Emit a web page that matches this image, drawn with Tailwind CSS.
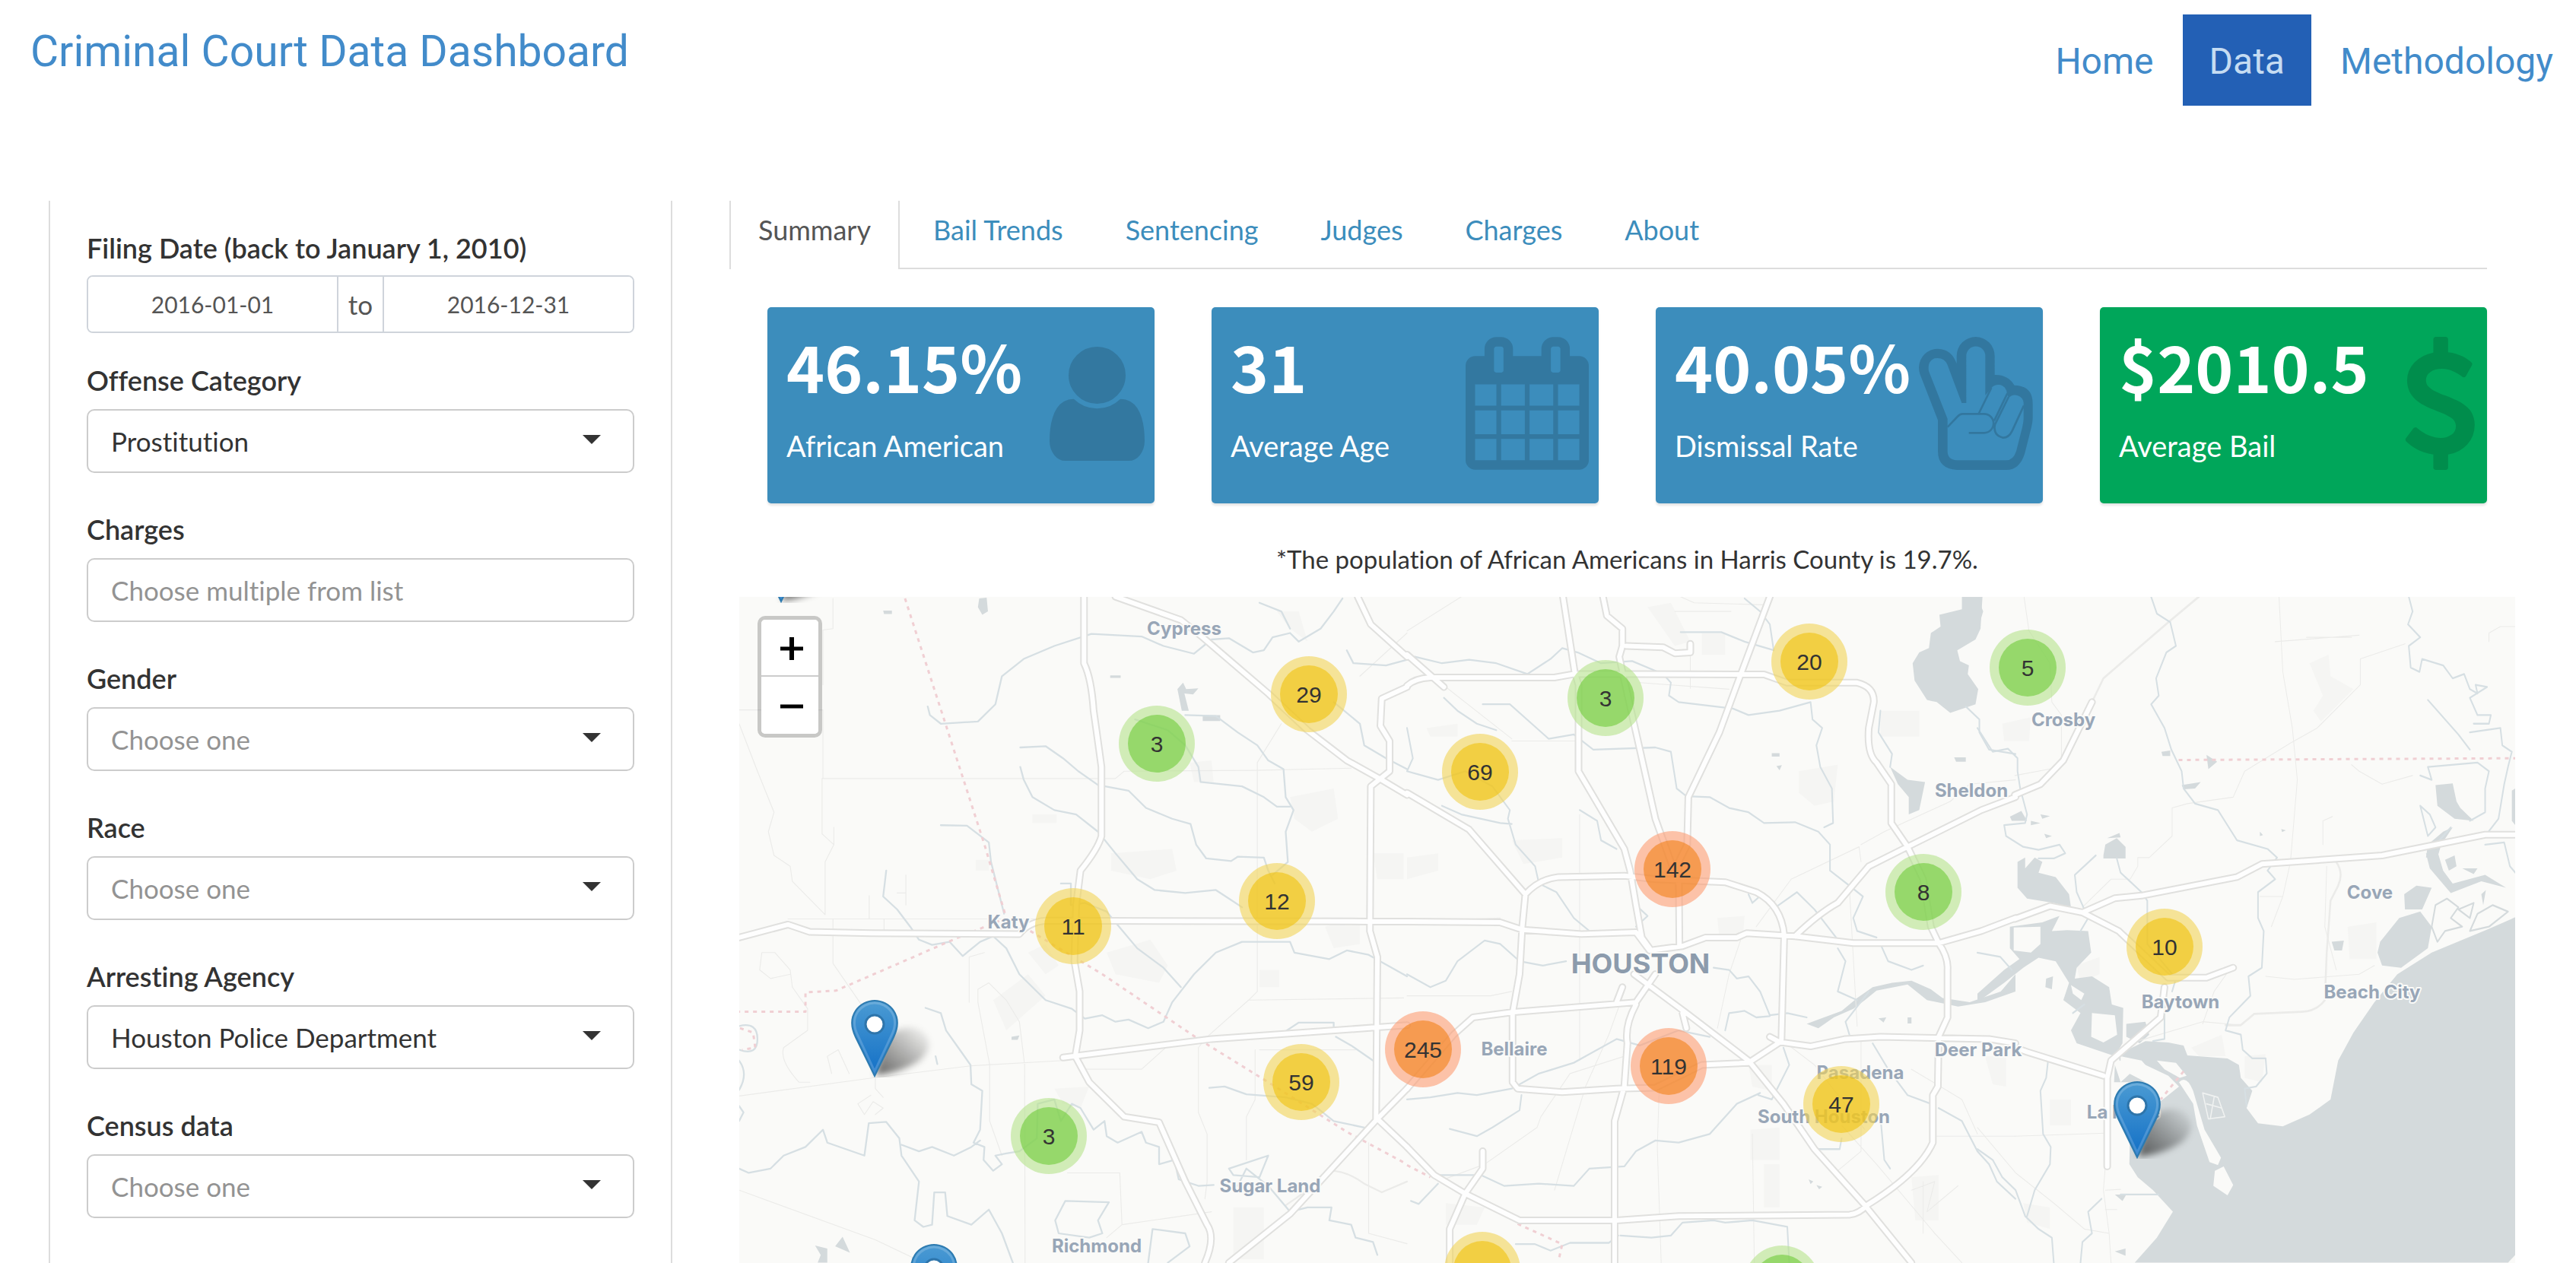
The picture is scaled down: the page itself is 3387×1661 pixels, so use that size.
<!DOCTYPE html>
<html lang="en">
<head>
<meta charset="utf-8">
<title>Criminal Court Data Dashboard</title>
<script src="https://cdn.jsdelivr.net/npm/@tailwindcss/browser@4"></script>
</head>
<body class="min-h-screen flex flex-col bg-white font-['Lato',sans-serif] text-[#333] [font-variant-ligatures:none]">

<header class="flex h-[264px] items-start justify-between pl-10 pr-[30px] font-['Roboto',sans-serif] text-[#428bca]">
  <h1 class="pt-8 text-[57px] leading-[72px]"><a href="#">Criminal Court Data Dashboard</a></h1>
  <nav class="mt-[19px] flex h-[120px] items-center text-[48px] leading-[60px]">
    <a href="#" class="px-[38px] pt-1">Home</a>
    <a href="#" aria-current="page" class="flex h-full items-center bg-[#2360b5] px-[35px] pt-1 text-[#c5dcf2]">Data</a>
    <a href="#" class="pl-[38px] pt-1">Methodology</a>
  </nav>
</header>

<div class="flex flex-1">
  <aside class="ml-16 w-[820px] shrink-0 border-x-2 border-[#ddd] px-12 pt-10">
    <form class="flex flex-col text-[35px] leading-[44px]">
      <fieldset>
        <legend class="font-semibold text-[36px]">Filing Date (back to January 1, 2010)</legend>
        <div class="mt-[14px] flex h-[76px] overflow-hidden rounded-lg border-2 border-[#cfd4db] text-[#555]">
          <input aria-label="From date" type="text" value="2016-01-01" class="w-0 min-w-0 flex-1 bg-white text-center text-[30px]">
          <span class="flex w-[62px] items-center justify-center border-x-2 border-[#cfd4db] bg-white">to</span>
          <input aria-label="To date" type="text" value="2016-12-31" class="w-0 min-w-0 flex-1 bg-white text-center text-[30px]">
        </div>
      </fieldset>

      <div class="mt-10">
        <label for="offense" class="block font-semibold text-[36px]">Offense Category</label>
        <div class="relative mt-4">
          <select id="offense" class="h-[84px] w-full appearance-none rounded-[10px] border-2 border-[#ccc] bg-white px-[30px]"><option>Prostitution</option></select>
          <svg class="pointer-events-none absolute right-11 top-[34px] h-3 w-6" viewBox="0 0 24 12" fill="#333"><path d="M0 0h24L12 12z"/></svg>
        </div>
      </div>
      <div class="mt-[52px]">
        <label for="charges" class="block font-semibold text-[36px]">Charges</label>
        <input id="charges" type="text" placeholder="Choose multiple from list" class="mt-4 block h-[84px] w-full rounded-[10px] border-2 border-[#ccc] bg-white px-[30px] placeholder:text-[#939393]">
      </div>
      <div class="mt-[52px]">
        <label for="gender" class="block font-semibold text-[36px]">Gender</label>
        <div class="relative mt-4">
          <select id="gender" class="h-[84px] w-full appearance-none rounded-[10px] border-2 border-[#ccc] bg-white px-[30px] text-[#939393]"><option>Choose one</option></select>
          <svg class="pointer-events-none absolute right-11 top-[34px] h-3 w-6" viewBox="0 0 24 12" fill="#333"><path d="M0 0h24L12 12z"/></svg>
        </div>
      </div>
      <div class="mt-[52px]">
        <label for="race" class="block font-semibold text-[36px]">Race</label>
        <div class="relative mt-4">
          <select id="race" class="h-[84px] w-full appearance-none rounded-[10px] border-2 border-[#ccc] bg-white px-[30px] text-[#939393]"><option>Choose one</option></select>
          <svg class="pointer-events-none absolute right-11 top-[34px] h-3 w-6" viewBox="0 0 24 12" fill="#333"><path d="M0 0h24L12 12z"/></svg>
        </div>
      </div>
      <div class="mt-[52px]">
        <label for="agency" class="block font-semibold text-[36px]">Arresting Agency</label>
        <div class="relative mt-4">
          <select id="agency" class="h-[84px] w-full appearance-none rounded-[10px] border-2 border-[#ccc] bg-white px-[30px]"><option>Houston Police Department</option></select>
          <svg class="pointer-events-none absolute right-11 top-[34px] h-3 w-6" viewBox="0 0 24 12" fill="#333"><path d="M0 0h24L12 12z"/></svg>
        </div>
      </div>
      <div class="mt-[52px]">
        <label for="census" class="block font-semibold text-[36px]">Census data</label>
        <div class="relative mt-4">
          <select id="census" class="h-[84px] w-full appearance-none rounded-[10px] border-2 border-[#ccc] bg-white px-[30px] text-[#939393]"><option>Choose one</option></select>
          <svg class="pointer-events-none absolute right-11 top-[34px] h-3 w-6" viewBox="0 0 24 12" fill="#333"><path d="M0 0h24L12 12z"/></svg>
        </div>
      </div>
    </form>
  </aside>

  <main class="ml-[75px] mr-20 flex min-w-0 flex-1 flex-col">
    <nav class="mr-[37px] flex h-[90px] text-[36px] leading-[44px] text-[#3c8dbc]">
      <a href="#" aria-current="page" class="border-x-2 border-[#ddd] px-9 pt-4 text-[#555]">Summary</a>
      <div class="flex flex-1 gap-[82px] border-b-2 border-[#ddd] pl-[44px] pt-4">
        <a href="#">Bail Trends</a>
        <a href="#">Sentencing</a>
        <a href="#">Judges</a>
        <a href="#">Charges</a>
        <a href="#">About</a>
      </div>
    </nav>

    <section class="ml-[50px] mr-[37px] mt-[50px] grid grid-cols-4 gap-[75px] text-white">
      <div class="relative h-[258px] rounded-[5px] bg-[#3c8dbc] pl-[25px] pt-[26px] shadow-[0_3px_3px_rgba(0,0,0,0.1)]">
        <svg class="absolute right-[13px] top-[52px] h-[150px] w-[125px] fill-black/15" viewBox="256 128 1280 1536"><path d="M1536 1399q0 109-62.5 187t-150.5 78h-854q-88 0-150.5-78t-62.5-187q0-85 8.5-160.5t31.5-152 58.5-131 94-89 134.5-34.5q131 128 313 128t313-128q76 0 134.5 34.5t94 89 58.5 131 31.5 152 8.5 160.5zm-256-887q0 159-112.5 271.5t-271.5 112.5-271.5-112.5-112.5-271.5 112.5-271.5 271.5-112.5 271.5 112.5 112.5 271.5z"/></svg>
        <p class="relative font-['Noto_Sans_CJK_SC',sans-serif] text-[85px] font-bold leading-[100px]">46.15%</p>
        <p class="relative mt-8 text-[38px] leading-[48px]">African American</p>
      </div>
      <div class="relative h-[258px] rounded-[5px] bg-[#3c8dbc] pl-[25px] pt-[26px] shadow-[0_3px_3px_rgba(0,0,0,0.1)]">
        <svg class="absolute right-[13px] top-[39px] h-[175px] w-[162px] fill-black/15" viewBox="64 0 1664 1792"><path d="M192 1664h288v-288h-288v288zm352 0h320v-288h-320v288zm-352-352h288v-320h-288v320zm352 0h320v-320h-320v320zm-352-384h288v-288h-288v288zm736 736h320v-288h-320v288zm-384-736h320v-288h-320v288zm768 736h288v-288h-288v288zm-384-352h320v-320h-320v320zm-352-864v-288q0-13-9.5-22.5t-22.5-9.5h-64q-13 0-22.5 9.5t-9.5 22.5v288q0 13 9.5 22.5t22.5 9.5h64q13 0 22.5-9.5t9.5-22.5zm736 864h288v-320h-288v320zm-384-384h320v-288h-320v288zm384 0h288v-288h-288v288zm32-480v-288q0-13-9.5-22.5t-22.5-9.5h-64q-13 0-22.5 9.5t-9.5 22.5v288q0 13 9.5 22.5t22.5 9.5h64q13 0 22.5-9.5t9.5-22.5zm384-64v1280q0 52-38 90t-90 38h-1408q-52 0-90-38t-38-90v-1280q0-52 38-90t90-38h128v-96q0-66 47-113t113-47h64q66 0 113 47t47 113v96h384v-96q0-66 47-113t113-47h64q66 0 113 47t47 113v96h128q52 0 90 38t38 90z"/></svg>
        <p class="relative font-['Noto_Sans_CJK_SC',sans-serif] text-[85px] font-bold leading-[100px]">31</p>
        <p class="relative mt-8 text-[38px] leading-[48px]">Average Age</p>
      </div>
      <div class="relative h-[258px] rounded-[5px] bg-[#3c8dbc] pl-[25px] pt-[26px] shadow-[0_3px_3px_rgba(0,0,0,0.1)]">
        <svg class="absolute right-[13px] top-[39px] h-[175px] w-[150px] opacity-15" viewBox="70 69 450 525">
          <path fill="#000" fill-rule="evenodd" d="M70 190A75 75 0 0 1 145 116Q200 118 219 175V144A75 75 0 0 1 369 144V219Q420 217 447 260Q519 262 519 332V390Q519 405 514 425L488 528Q468 594 415 594H220Q145 590 145 520V398L75 218Q70 205 70 190ZM183 392L109 204Q103 165 132 154Q168 148 182 178L239 330H257V144A37 37 0 0 1 332 144V300L354 274A34 34 0 0 1 417 292L424 310A34 34 0 0 1 483 330V390Q483 405 478 425L454 520Q442 556 415 556H220Q183 554 183 520Z"/>
          <path fill="none" stroke="#000" stroke-width="8" d="M356 270L306 372M419 292L367 400M183 425L222 384Q232 373 242 373H327A37 37 0 0 1 327 448H267M424 306L370 415Q362 458 402 467Q425 467 438 440L484 340"/>
        </svg>
        <p class="relative font-['Noto_Sans_CJK_SC',sans-serif] text-[85px] font-bold leading-[100px]">40.05%</p>
        <p class="relative mt-8 text-[38px] leading-[48px]">Dismissal Rate</p>
      </div>
      <div class="relative h-[258px] rounded-[5px] bg-[#00a65a] pl-[25px] pt-[26px] shadow-[0_3px_3px_rgba(0,0,0,0.1)]">
        <svg class="absolute right-[16px] top-[39px] h-[175px] w-[92px] fill-black/15" viewBox="424 0 938 1792"><path d="M1362 1185q0 153-99.5 263.5t-258.5 136.5v175q0 14-9 23t-23 9h-135q-13 0-22.5-9.5t-9.5-22.5v-175q-66-9-127.5-31t-101.5-44.5-74-48-46.5-37.5-17.5-18q-17-21-2-41l103-135q7-10 23-12 15-2 24 9l2 2q113 99 243 125 37 8 74 8 81 0 142.5-43t61.5-122q0-28-15-53t-33.5-42-58.5-37.5-66-32-80-32.5q-39-16-61.5-25t-61.5-26.5-62.5-31-56.5-35.5-53.5-42.5-43.5-49-35.5-58-21-66.5-8.5-78q0-138 98-242t255-134v-180q0-13 9.5-22.5t22.5-9.5h135q14 0 23 9t9 23v176q57 6 110.5 23t87 33.5 63.5 37.5 39 29 15 14q17 18 5 38l-81 146q-8 15-23 16-14 3-27-7-3-3-14.5-12t-39-26.5-58.5-32-74.5-26-85.5-11.5q-95 0-155 43t-60 111q0 26 8.5 48t29.5 41.5 39.5 33 56 31 60.5 27 70 27.5q53 20 81 31.5t76 35 75.5 42.5 62 50 53 63.5 31.5 76.5 13 94z"/></svg>
        <p class="relative font-['Noto_Sans_CJK_SC',sans-serif] text-[85px] font-bold leading-[100px]">$2010.5</p>
        <p class="relative mt-8 text-[38px] leading-[48px]">Average Bail</p>
      </div>
    </section>

    <p class="ml-[13px] mt-[51px] text-center text-[33px] leading-[44px]">*The population of African Americans in Harris County is 19.7%.</p>

    <section id="map" class="relative ml-[13px] mt-7 min-h-[876px] flex-1 overflow-hidden bg-[#fafaf8] font-['Liberation_Sans',sans-serif]">
      <svg class="absolute left-0 top-0 h-[876px] w-[2335px]" viewBox="972 785 2335 876" fill="none" stroke-linejoin="round" stroke-linecap="round">
        <defs>
          <linearGradient id="pinFill" x1="0" y1="0" x2="0" y2="1"><stop offset="0" stop-color="#4b9bd3"/><stop offset="1" stop-color="#126fc6"/></linearGradient>
          <linearGradient id="pinShade" x1="0" y1="1" x2="1" y2="0"><stop offset="0" stop-color="#000" stop-opacity=".6"/><stop offset="1" stop-color="#000" stop-opacity="0"/></linearGradient>
          <filter id="soft" x="-30%" y="-30%" width="160%" height="160%"><feGaussianBlur stdDeviation="4"/></filter>

          <!-- motorways, one set per third of the map -->
          <path id="roadsW" vector-effect="non-scaling-stroke" d="M828 26V180Q845 215 850 290Q860 360 868 420V580Q860 610 820 660L810 740L806 870L818 940V1030L808 1090L840 1150Q880 1190 920 1230L1000 1243L1060 1380L1110 1480Q1130 1510 1105 1568M38 815L150 785L200 802L340 805L680 807Q700 780 740 776L1480 778H1568M900 26L1050 80L1100 120L1250 250L1340 335L1430 405L1510 450L1568 485M1568 235L1510 262L1507 325L1528 360V430L1485 465L1483 800L1500 860L1497 1235M1455 26L1485 90L1568 165M780 1093L1120 1050L1500 1023L1568 1018M1160 1568L1300 1455L1500 1235L1568 1165M1500 1235L1568 1300"/>
          <path id="roadsC" vector-effect="non-scaling-stroke" d="M0 160L95 235M0 232Q20 215 60 213H380L430 205H600L920 206L980 225H1160Q1205 235 1203 270L1190 330Q1185 390 1210 410L1248 460V550L1290 605L1330 680L1350 790L1370 828Q1395 860 1393 890V1000L1370 1045L1368 1160L1355 1180V1290Q1320 1360 1185 1435Q1165 1455 1140 1457L700 1460L540 1470H290L150 1408L70 1365L0 1300M402 26L432 200L442 230V430L560 610L575 660L590 740L605 815L625 840M505 26L515 70L555 100V140L547 165L560 220L640 540L700 690M565 140L660 143L690 157L730 155V135M935 26L850 230L805 340L725 490L722 600L700 640L702 835M0 480L160 565L305 715Q340 680 390 675L560 672L640 680L820 687L900 710Q965 740 972 810L965 1050M305 715L297 790L290 900L272 990V1150L285 1165L400 1173L540 1165L640 1163L760 1110L880 1105L965 1055M0 778L240 780L297 797L450 807L590 803L625 845L710 835L770 815H850L875 805L1000 812L1150 828H1370L1480 800L1568 770M0 1165L120 1040L170 1000L270 988L590 965L640 900M585 900L720 990L880 1100L970 1200L1050 1305L1180 1435L1300 1568M590 970Q560 1020 568 1060L560 1160L535 1240V1568M935 1045L960 1057L1040 1067L1130 1050L1220 1045L1500 1050L1568 1060M1000 812Q1060 760 1110 735L1190 650L1290 605L1480 520L1568 490M150 1408L110 1490V1568M150 1408L195 1350V1310M555 930L540 965M710 990L720 1025"/>
          <path id="roadsE" vector-effect="non-scaling-stroke" d="M98 485L165 460L225 405L300 270M98 772L190 742L275 757L370 800L500 908H600L670 885M275 757L360 724L430 718L680 675L745 645L1060 625L1330 577H1420M490 930L480 1000L350 1100L340 1140V1345M98 1070L130 1080L330 1135"/>
        </defs>

        <!-- developed land and parks -->
        <g fill="#f5f5f3">
          <path transform="translate(950 770) scale(.574 .568)" d="M1270 60H1320L1340 130L1300 100ZM1300 490L1400 470L1410 540L1350 570L1310 540ZM890 620L1030 610L1040 660L980 680L890 660ZM880 850L980 820L1020 880L1000 920L900 900ZM620 960L700 900L740 950L650 1030ZM700 850L740 830L770 880L740 900ZM1230 890H1275V930H1230ZM1380 790L1460 770V830L1400 840ZM760 1165L840 1160L820 1210L780 1200ZM1170 1440H1240V1560H1170ZM710 530H765V550H710ZM1070 410L1120 405L1125 455H1080ZM580 635H610V660H580ZM1490 620H1560V680H1500Z"/>
          <path transform="translate(1850 770) scale(.5102 .568)" d="M620 50L680 40L730 130L690 140ZM760 110H820V160H760ZM270 590L400 585V630L300 645ZM1010 430L1110 415L1100 500L1050 510L1010 480ZM1220 290H1320V350H1220ZM0 630L80 620V660L0 680ZM885 1260L960 1255V1330H885ZM920 1340H960V1440H920ZM800 770L870 765L865 820H805ZM1300 1370L1370 1365V1470H1310ZM50 330L130 320V350H60ZM100 1430L200 1440L180 1480H100ZM880 1110H940V1170L890 1160Z"/>
          <path transform="translate(2600 770) scale(.5019 .568)" d="M870 180L920 160L925 210L985 240L900 315L880 290L905 255ZM970 790L1045 780V865H975ZM560 1070L640 1040L650 1090H580ZM65 320L140 305L135 360H70ZM700 1090L755 1085L745 1150L700 1140ZM20 1090H75V1160L40 1155ZM120 1430L190 1440V1490L130 1475ZM260 880L320 860V900L270 920ZM190 1190H245V1250H190Z"/>
        </g>

        <!-- lakes, ship channel and bay -->
        <g fill="#d4dadc">
          <path transform="translate(950 770) scale(.574 .568)" d="M588 30L605 28L608 60L595 68L585 50ZM368 58H388V66H370ZM212 1528L240 1535V1568H218L225 1550ZM275 1508L292 1545L258 1530ZM1042 240L1055 225L1062 240L1090 238L1078 252L1058 250L1068 290H1052ZM1100 300H1140V314H1100ZM888 208H912V214H888ZM662 1045L680 1042L676 1052H662Z"/>
          <path transform="translate(1850 770) scale(.5102 .568)" d="M1430 26H1483L1478 100L1465 125L1418 150L1425 175L1448 185L1445 205L1472 240L1465 275L1400 295L1365 270L1340 265L1308 220L1303 180L1320 155L1345 145L1350 110L1375 95L1372 68L1430 55ZM1245 420L1290 450L1335 455L1320 520L1293 530V490L1265 460ZM940 388H960V396H940ZM952 418L966 416L960 428ZM1410 398H1440V408H1415ZM1160 955L1200 930L1250 920L1300 915L1350 935L1380 955L1450 965L1530 940L1568 900V940L1490 965L1420 975L1340 960L1290 924L1210 938L1180 960L1150 980L1100 1000L1060 1025L1030 1015L1060 1005L1120 985ZM1290 1000H1300V1014H1290ZM1215 1002L1235 1000L1228 1012ZM1035 1375L1047 1380L1040 1386ZM1055 1388L1070 1392L1062 1398Z"/>
          <g transform="translate(2600 770) scale(.5019 .568)">
            <path d="M1409 768L1340 795L1190 850L1100 900L1040 965L985 1035L945 1100L925 1190L870 1225L800 1252L735 1245L705 1210L720 1170L690 1140L685 1110L655 1095L550 1088L540 1065L500 1058L440 1055L370 1085L372 1100L440 1110L500 1135L528 1160L400 1250L398 1340L420 1370L460 1400L512 1450L470 1510L412 1568H1390L1409 1550Z"/>
            <path d="M105 640L125 630V655L150 630L170 640L160 665L205 675L240 715L245 745L200 735L130 725L105 700ZM85 535L115 522L130 545L90 545ZM140 545L165 550L140 555ZM165 530L190 534L170 540ZM175 575L195 580L180 585ZM330 625L335 600L365 585L388 605V632H330ZM340 585L372 573L375 583ZM0 26L15 60L0 105ZM482 385L505 382V395H485ZM600 392L628 408L605 425ZM535 462L585 455L570 470L540 472ZM85 790L170 780L215 765L195 800L235 798L290 800L298 850L260 885L255 910L300 905L345 930L352 970L382 978L380 1060L360 1090L310 1075L260 1060L245 1030L270 990L225 960L240 920L205 870L160 862L120 885L70 920L0 965V945L70 890L110 865L85 840ZM180 910L198 905L195 935L178 930ZM390 1015L440 1010L450 1040L425 1060L390 1045ZM1200 462L1245 458L1255 500L1265 515L1300 545L1250 540L1205 510ZM1118 715L1150 695L1190 700L1165 750L1120 750ZM1055 825L1105 770L1160 755L1190 790L1180 840L1110 885L1060 880L1048 850ZM1175 620L1205 615L1220 660L1245 690L1330 670L1385 700L1320 685L1240 712L1185 655ZM1225 635L1250 625L1255 650L1235 660ZM1270 655L1310 655L1300 668ZM1180 600L1220 570L1245 560L1215 600L1205 630H1175ZM1320 715L1332 705L1325 740ZM928 825L960 822L955 845H935ZM1400 475L1409 470V555L1400 545ZM360 1110L375 1150L400 1130L440 1150L380 1150H358ZM360 1410H390L380 1425ZM360 1542L388 1535V1552ZM740 570L748 578L740 580ZM796 564L808 567L798 571Z"/>
            <path fill="#fafaf8" d="M95 792L165 790V830L140 850L95 845ZM300 990L360 995L366 1040L330 1058L298 1045ZM528 1150Q548 1132 565 1170L595 1260L638 1325L630 1342L608 1335L575 1250L565 1200ZM622 1355L645 1345L670 1388L655 1412L618 1390ZM470 1100L520 1105L548 1135L530 1140L490 1120ZM375 1090L430 1100L480 1150L420 1140L375 1120ZM245 925L280 945L272 960L250 945Z"/>
            <path stroke="#f0f2f1" stroke-width="3" d="M590 1175L630 1185L648 1230L605 1235ZM600 1200L640 1210M610 1235L620 1185"/>
            <path fill="#fafaf8" stroke="#d4dadc" stroke-width="4" d="M1200 740L1230 725L1260 745L1240 770L1270 790L1225 800L1205 825L1190 790ZM1260 750L1300 735L1290 770ZM1310 760L1350 740L1390 755L1340 790L1290 800Z"/>
          </g>
        </g>

        <!-- minor roads -->
        <g stroke="#ebebe9" stroke-width="2">
          <path transform="translate(950 770) scale(.574 .568)" d="M38 288H230V447M253 30V100L230 103V230M38 320L80 430L118 525L105 570L118 625L155 650L160 685L235 762V640L255 600L228 575V447H900L920 430L1220 428L1440 423M255 560V600M150 772H800M336 718V772M253 772V875L345 1010M370 772V805M1225 780V410L1280 320M1225 780V940L1205 960L1110 1045L1090 1070V1220L1110 1270V1380L1105 1420M1205 960L1560 955M1230 1075H1450M565 965V860L600 850M585 965V935L610 920L650 960L680 1010L692 1110L693 1568M585 965L612 1110V1240L640 1320M780 1100L570 1112L345 1140L38 1182M38 1400L350 1515L460 1568M790 1360H910L915 1480L1120 1450M915 1480L880 1510M1200 1330V1230L1220 1190V1075M820 1120H960L1015 1070M420 670V740M400 712H420M1460 210L1568 110M1480 1290V1500L1568 1524M250 1130L240 1090L265 1075L290 1130M200 1150H175Q130 1100 140 1070L195 1030V980L160 930L155 890L120 850H90L85 890L110 910L155 900M340 1180L310 1200L325 1225L345 1195L368 1210L350 1225M350 1140V1165L368 1185"/>
          <path transform="translate(1850 770) scale(.5102 .568)" d="M0 105L140 26M0 778L240 770M730 155V238M600 225L830 240M270 360H435M0 950L215 950L270 940M445 530V1100M650 1165L645 1300L655 1568M890 1270L895 1568M1170 1050V1310L1110 1355M860 820L830 900L800 1025M900 790L990 680L1165 605L1170 640M1170 600L1230 570L1400 500L1450 460L1568 450M380 1400L460 1160L520 1040L560 940M80 1380L200 1340L335 1255L345 1230L420 1130L560 1090M1120 1250L1210 1340L1360 1500L1430 1568M970 1055L1050 1110L1180 1260M1365 1275H1568M1140 700L1160 1020M1300 1120L1430 1190L1470 1270M1300 1400L1360 1380L1340 1450L1420 1390M1330 1380V1500M100 235L270 355M690 20L740 40L930 45M690 60H835"/>
          <path transform="translate(2600 770) scale(.5019 .568)" d="M0 1255L100 1360L200 1430L280 1490L345 1500M98 1275L335 1268M122 26L135 105L190 180L195 270L220 300V400M790 26L800 200L825 330L838 450L820 640L800 720L770 790M1003 170V230L890 330L820 365L700 430L670 490L550 505L510 515V580L450 630H420V650L400 680H350L275 745M1340 130V110L1370 95H1409M1003 170L1120 135M862 120H980M780 130L1000 115M905 600V545L930 535M915 650L910 790L940 890M800 720H740M590 1015L620 940L660 890M400 1060L590 1010L690 1018M755 905L830 912L1000 900L1040 880M335 1345L330 1400L345 1500L350 1568M335 1445H365M335 1400L375 1398M98 440L220 420M1140 440L1060 460L1000 430L980 415"/>
          <path stroke-width="5" transform="translate(2600 770) scale(.5019 .568)" d="M300 270L330 215L500 85L580 26M940 640Q960 665 945 695L925 730L915 850L910 960Q890 985 850 987L725 992L690 1018H650"/>
          <path stroke-width="4" transform="translate(950 770) scale(.574 .568)" d="M1390 1355Q1430 1355 1470 1385L1510 1405L1568 1380M1340 1400L1290 1435"/>
        </g>

        <!-- creeks and bayous -->
        <g stroke="#d6dfe3" stroke-width="4">
          <path transform="translate(950 770) scale(.574 .568)" d="M470 280L475 300L500 320L585 315L625 275L640 210L690 170L760 140L845 112L960 118L1010 140L1080 158L1120 125L1160 122L1215 155L1240 150L1260 120L1300 110L1320 130L1370 100L1400 60L1420 30M1230 40L1280 60L1300 100M682 375L740 372L780 400L815 430L860 462L930 475L970 515L1030 540L1072 552L1085 600L1108 632L1165 638L1180 628L1240 630L1250 660L1265 690M682 420L690 450L710 490L760 520L810 530L860 570L900 620L950 680L990 705L1060 712L1130 705L1160 725L1190 745M1060 300L1130 302L1180 340L1225 370L1250 405L1285 425L1290 490L1308 520L1290 570L1295 640L1260 670M945 310L1020 335L1060 370L1090 420L1095 455L1190 465L1240 490L1270 512H1300M500 555L560 556L610 595L615 640L630 700L645 760M375 660L368 720L400 750L430 790L450 820L480 832L520 825L550 858L590 825L620 812L650 840L680 900L740 960L800 980L830 1003L870 995L900 1010L930 1005L975 1025L1010 1010L1030 965L1080 900L1130 850L1190 825L1300 825L1310 850L1390 865L1430 845L1480 855L1568 905M775 690H798V740L830 735L880 755L900 780L950 840L1010 885L1050 930M465 978L500 990L512 1030L540 1070L568 1110L570 1155L595 1170L590 1260L575 1290L600 1300L598 1330L620 1355L640 1340L625 1320L650 1315L680 1310L720 1280L722 1200L760 1190L775 1240L800 1200L820 1210L850 1260L875 1240L880 1275L905 1290L960 1265L970 1290L1000 1300L1000 1340L1035 1330L1045 1375L1090 1390L1125 1388M410 1295L450 1310L480 1300L530 1320L570 1300L590 1285M38 1350L60 1360L110 1350L140 1320L190 1300L230 1260L240 1290L325 1320L335 1245L375 1242L405 1280L410 1320L450 1380L440 1470L460 1485L480 1480L485 1405L510 1405L515 1460L570 1480L610 1445L640 1500L665 1568M785 1425L885 1428L860 1470L870 1500L840 1510L770 1500L762 1470ZM975 1568L985 1490L1060 1500L1070 1530L1020 1568M38 1020Q80 1010 80 1050T38 1075M38 1100Q60 1130 38 1168M38 1205L48 1220L38 1240M1115 1163L1150 1160L1200 1178L1290 1185L1350 1200L1400 1240L1470 1255M1290 1032L1320 1012H1400V1025M1405 1045L1440 1065L1490 1100M1160 1350L1250 1320L1230 1370L1170 1365ZM1180 1390L1200 1350L1250 1390L1300 1450L1340 1440L1395 1440L1390 1470L1440 1480L1450 1510L1490 1520L1500 1550M1430 150L1445 180L1520 185L1568 172M1400 270L1460 320L1470 370L1520 400L1568 425M488 1090L492 1108"/>
          <path transform="translate(1850 770) scale(.5102 .568)" d="M20 165L90 180L160 172L230 180L310 205L370 170L400 145L440 155L500 180L580 175L660 205L680 225L675 255L700 270L840 285L880 300L960 290L1040 270L1045 310L1070 330L1055 370L1065 420L1095 470L1098 550L1075 560M705 108H810L870 130L945 150L935 90L910 60L870 30M195 275H265L365 355L430 345L480 380L640 375L680 385L695 470L720 488L780 490L830 515L880 525L920 550L1000 548L1060 570L1090 600V660L1140 695L1175 720L1150 770L1160 800L1210 815M95 260L130 290L180 320L230 335M0 330L15 400L0 430M0 430L80 450L150 430L220 465L265 520L260 540L280 600L330 650L340 690L385 710L430 770L470 800M0 900L60 930L100 915L130 870L200 822L240 830L290 870L350 880L410 870M90 510L140 530L240 550L270 552M445 520L490 545L500 590L540 610M790 885L830 890L850 910L880 905L910 940L935 995L980 990L1030 1000M820 1030L830 990L870 985L900 1000L935 997M590 740L620 765L590 790M0 1190L60 1185L130 1175L180 1180L270 1165L340 1130L430 1105L470 1085L540 1050L600 1065L700 1030L780 1045M110 1258L180 1275L220 1255L290 1215L295 1180M80 1365H190L250 1390L340 1385L430 1390L470 1350L560 1345L590 1310L640 1285L700 1290L780 1270L850 1200L910 1175M970 1070L985 1110L940 1190L905 1180M1110 840L1130 870L1110 940L1160 960M1220 830L1240 870L1300 890L1330 880M1060 1305H1115L1120 1280M1220 1230L1230 1330L1245 1350M550 1505L630 1510L680 1505L710 1475L790 1470L820 1475L890 1470L980 1485L985 1568M280 1525L330 1525L370 1540L420 1522L520 1522L545 1505M1370 1210L1430 1240L1470 1310L1500 1340L1520 1380L1568 1420M1220 290L1215 340L1250 390L1245 420M1440 280L1475 310L1475 340L1500 380L1568 390M1200 1060L1240 1120L1290 1180L1350 1200M1190 940L1130 1010L1140 1040M880 715L890 735L915 715M950 745L1005 710L1050 750L1110 820M10 1425L30 1432L80 1385"/>
          <path transform="translate(2600 770) scale(.5019 .568)" d="M455 26L470 65L505 85L520 140L495 155L468 215L475 255L455 275L490 330L508 380L535 430L540 470L570 505L630 520L680 590L760 610L785 630L760 660L780 680L735 710V770L750 800L745 885L710 905L715 950L660 1000L650 1030L690 1040L695 1075L720 1095L755 1095L758 1130L730 1160L700 1165L705 1205M0 330L40 385L80 378L105 400V430L112 470L130 530L125 550L70 555L75 580L120 605L160 612L215 600L230 620L200 632H160M365 632L375 665L430 710L445 730V830L520 910L510 940M310 625L255 670L260 710L290 770L270 800M1130 26L1140 60L1128 90L1160 120L1130 140L1135 190L1158 200L1165 170L1220 185L1245 215L1275 205L1290 240L1310 250L1305 230L1335 235L1290 260L1310 300L1345 300L1340 320L1300 320M1290 340L1370 330L1375 370L1400 385L1390 420L1380 460L1365 540L1330 580M1180 265L1260 345L1290 380M1160 510L1180 580L1200 560L1185 530L1160 510M1290 545L1330 525V470L1340 430L1310 410L1180 420L1190 450L1160 440M1330 600L1380 595L1395 650L1409 665M1240 560L1210 590M0 1305L40 1330L65 1370L100 1400L125 1460L160 1490L195 1510L200 1568M185 1100L180 1140L165 1170L172 1270L192 1300L190 1340L150 1400L130 1460M325 1420L290 1450L300 1500L275 1520L270 1568M375 1410L475 1410M0 850L60 860L90 890M490 940V1050L460 1055M280 970L250 990"/>
        </g>

        <!-- county lines -->
        <g stroke="#f0cfd3" stroke-width="3" stroke-linecap="butt" stroke-dasharray="5 6">
          <path vector-effect="non-scaling-stroke" transform="translate(950 770) scale(.574 .568)" d="M418 30L600 600L650 770L540 815L260 938L190 942V987H38M705 800L870 900L1090 1050L1250 1150L1430 1265L1568 1340M40 1025L70 1035L75 1070L45 1075"/>
          <path vector-effect="non-scaling-stroke" transform="translate(1850 770) scale(.5102 .568)" d="M0 1342L60 1370M285 1478L400 1525L390 1565"/>
          <path vector-effect="non-scaling-stroke" transform="translate(2600 770) scale(.5019 .568)" d="M527 404L1409 400M540 1125L480 1190"/>
        </g>

        <g stroke="#e0e0de" stroke-width="10">
          <use href="#roadsW" transform="translate(950 770) scale(.574 .568)"/>
          <use href="#roadsC" transform="translate(1850 770) scale(.5102 .568)"/>
          <use href="#roadsE" transform="translate(2600 770) scale(.5019 .568)"/>
        </g>
        <g stroke="#fefefe" stroke-width="6">
          <use href="#roadsW" transform="translate(950 770) scale(.574 .568)"/>
          <use href="#roadsC" transform="translate(1850 770) scale(.5102 .568)"/>
          <use href="#roadsE" transform="translate(2600 770) scale(.5019 .568)"/>
        </g>

        <g class="fill-[#98a6b7] stroke-[#fafaf8] stroke-[4px] font-['Inter',sans-serif] text-[24px] font-bold [paint-order:stroke]" text-anchor="middle">
          <text x="1557" y="835">Cypress</text>
          <text x="1326" y="1221">Katy</text>
          <text x="1670" y="1568">Sugar Land</text>
          <text x="1442" y="1647">Richmond</text>
          <text x="2157" y="1280" class="fill-[#8c9bac] text-[36px]">HOUSTON</text>
          <text x="1991" y="1388">Bellaire</text>
          <text x="2592" y="1048">Sheldon</text>
          <text x="2601" y="1389">Deer Park</text>
          <text x="2446" y="1419">Pasadena</text>
          <text x="2398" y="1477">South Houston</text>
          <text x="2713" y="955">Crosby</text>
          <text x="2867" y="1326">Baytown</text>
          <text x="3119" y="1313">Beach City</text>
          <text x="3116" y="1182">Cove</text>
          <text x="2792" y="1471">La Porte</text>
        </g>
      </svg>

      <div class="absolute left-6 top-[25px] flex w-[85px] flex-col rounded-[10px] border-[5px] border-black/20 bg-clip-padding">
        <button type="button" aria-label="Zoom in" class="flex h-[75px] items-center justify-center rounded-t-[5px] border-b-2 border-[#ccc] bg-white pl-1"><svg class="size-8" viewBox="0 0 32 32" stroke="#000"><path stroke-width="5" d="M1 17H31"/><path stroke-width="6" d="M16 2V32"/></svg></button>
        <button type="button" aria-label="Zoom out" class="flex h-[75px] items-center justify-center rounded-b-[5px] bg-white pl-1"><svg class="size-8" viewBox="0 0 32 32" stroke="#000"><path stroke-width="5" d="M1 17H31"/></svg></button>
      </div>
    </section>
  </main>
</div>

<script>
  const map = document.getElementById('map');
  const tones = {
    s: ['bg-[#b5e28c]/60', 'bg-[#6ecc39]/60'],
    m: ['bg-[#f1d357]/60', 'bg-[#f0c20c]/60'],
    l: ['bg-[#fd9c73]/60', 'bg-[#f18017]/60'],
  };
  // cluster centres: x, y, count, tone
  const clusters = [
    [549, 193, 3, 's'], [749, 128, 29, 'm'], [439, 433, 11, 'm'], [707, 400, 12, 'm'],
    [739, 638, 59, 'm'], [407, 709, 3, 's'], [974, 230, 69, 'm'], [1139, 133, 3, 's'],
    [1407, 85, 20, 'm'], [1227, 358, 142, 'l'], [1557, 388, 8, 's'], [899, 595, 245, 'l'],
    [1222, 617, 119, 'l'], [1449, 667, 47, 'm'], [977, 885, 24, 'm'], [1371, 903, 5, 's'],
    [1694, 93, 5, 's'], [1874, 460, 10, 'm'],
  ];
  // pin tips: x, y
  const pins = [[55, 7], [178, 631], [256, 952], [1838, 738]];
  for (const [x, y] of pins) {
    map.insertAdjacentHTML('beforeend', `<svg class="absolute h-[102px] w-[140px]" style="left:${x - 31}px;top:${y - 101}px" viewBox="0 0 140 102">
      <path d="M32 99L44 50Q72 28 94 42Q112 60 90 80Q66 96 32 99Z" fill="url(#pinShade)" filter="url(#soft)"/>
      <path d="M31 100L6 49C-8 20 12 1 31 1S70 20 56 49Z" fill="url(#pinFill)" stroke="#2e7bb0" stroke-width="2"/>
      <path d="M31 94L9 47C-4 21 14 4 31 4S66 21 53 47Z" fill="none" stroke="#fff" stroke-opacity=".18" stroke-width="3"/>
      <circle cx="31" cy="32" r="12" fill="#fff" stroke="#2e75ab" stroke-width="3"/></svg>`);
  }
  for (const [x, y, n, t] of clusters) {
    map.insertAdjacentHTML('beforeend', `<button type="button" class="absolute size-[100px] rounded-full p-[12px] ${tones[t][0]}" style="left:${x - 50}px;top:${y - 50}px"><span class="flex size-[76px] items-center justify-center rounded-full text-[30px] ${tones[t][1]}">${n}</span></button>`);
  }
</script>
</body>
</html>
